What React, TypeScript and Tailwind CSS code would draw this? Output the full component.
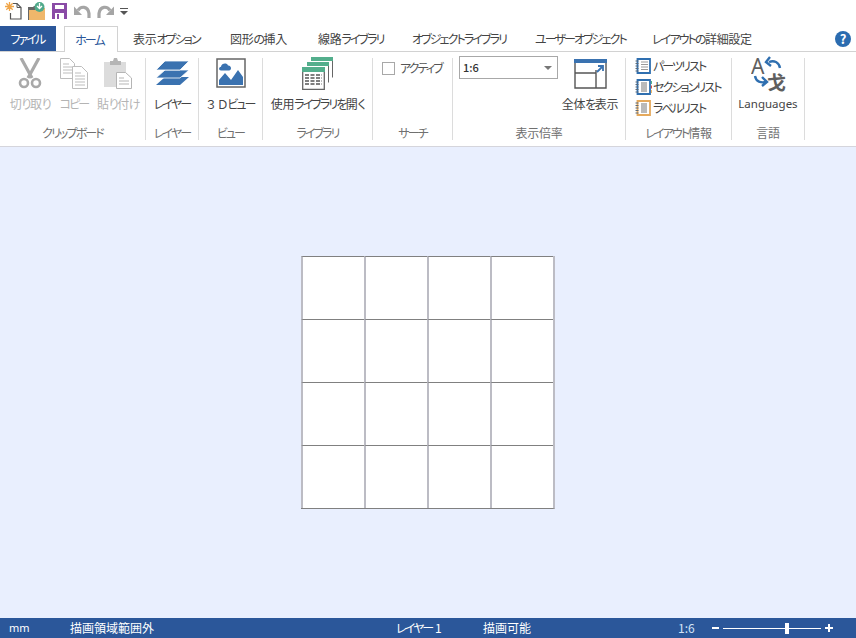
const FONT = "font-['Noto_Sans_CJK_JP','Noto_Sans',sans-serif] [font-feature-settings:'palt']"

const TABS = [
  { label: "表示オプション", width: "w-[97px]" },
  { label: "図形の挿入", width: "w-[88px]" },
  { label: "線路ライブラリ", width: "w-[94px]" },
  { label: "オブジェクトライブラリ", width: "w-[123px]" },
  { label: "ユーザーオブジェクト", width: "w-[117px]" },
  { label: "レイアウトの詳細設定", width: "w-[130px]" },
]

function Jp({ text }: { text: string }) {
  const runs = text.split(/([\u30A0-\u30FF]+|[\u3040-\u309F]+)/).filter(Boolean)

  return (
    <>
      {runs.map((run, i) => {
        if (/^[\u30A0-\u30FF]/.test(run)) {
          return <span key={i} className="tracking-[-1.900px]">{run}</span>
        }
        if (/^[\u3040-\u309F]/.test(run)) {
          return <span key={i} className="tracking-[-1.500px]">{run}</span>
        }
        return <span key={i} className="tracking-[-0.300px]">{run}</span>
      })}
    </>
  )
}

function NewIcon() {
  return (
    <svg width="17" height="18" viewBox="0 0 17 18" fill="none">
      <path d="M8 1.500h4l4 4v11.500H5.500v-6" stroke="#555" strokeWidth="1.200" />
      <path d="M12 1.500v4h4" stroke="#555" />
      <path d="M4.500 0v9M0 4.500h9M1.300 1.300l6.400 6.400M7.700 1.300l-6.400 6.400" stroke="#f0a64a" strokeWidth="1.300" />
    </svg>
  )
}

function OpenIcon() {
  return (
    <svg width="18" height="18" viewBox="0 0 18 18">
      <path d="M0 5h5l1-1h3v14H0z" fill="#666" />
      <path d="M1 18V8h6l2-2h8v12z" fill="#efb76b" />
      <circle cx="11.500" cy="5" r="5" fill="#4fa98a" />
      <path d="M9 4l2.500 2.500L14 4M11.500 1v5" stroke="#fff" strokeWidth="1.300" fill="none" />
    </svg>
  )
}

function SaveIcon() {
  return (
    <svg width="15" height="16" viewBox="0 0 15 16">
      <path d="M0 0h15v16H0z" fill="#8a4ba6" />
      <path d="M3 2h9v4H3z" fill="#fff" />
      <path d="M3 10h9v6H3z" fill="#fff" />
      <path d="M5 11h2v5H5z" fill="#8a4ba6" />
    </svg>
  )
}

function UndoIcon({ flip }: { flip?: boolean }) {
  return (
    <svg width="17" height="14" viewBox="0 0 17 14" fill="none" className={flip ? "-scale-x-100" : ""}>
      <path d="M4 6.500c2.500-4.500 10-5 11 3V14" stroke="#a5a5a5" strokeWidth="3.200" />
      <path d="M0 2.500V11h8z" fill="#a5a5a5" />
    </svg>
  )
}

function ScissorsIcon() {
  return (
    <svg width="24" height="31" viewBox="0 0 24 31" fill="none">
      <path d="M3 0l11 20M21 0L10 20" stroke="#a9a9a9" strokeWidth="3.200" />
      <circle cx="6" cy="25" r="4" stroke="#a9a9a9" strokeWidth="2.600" />
      <circle cx="18" cy="25" r="4" stroke="#a9a9a9" strokeWidth="2.600" />
    </svg>
  )
}

function CopyIcon() {
  return (
    <svg width="28" height="31" viewBox="0 0 28 31" fill="none" stroke="#bdbdbd">
      <path d="M.500.500h9l5 5v15H.500z" fill="#fff" />
      <path d="M3 6h6M3 9h9M3 12h9M3 15h9" />
      <path d="M12.500 8.500h9l6 6v16h-15z" fill="#fff" />
      <path d="M15 15h6M15 18h10M15 21h10M15 24h10M15 27h10" />
    </svg>
  )
}

function PasteIcon() {
  return (
    <svg width="28" height="31" viewBox="0 0 28 31" fill="none">
      <path d="M0 4h22v25H0z" fill="#dcdcdc" />
      <path d="M6 3h3l1-3h3l1 3h3v4H6z" fill="#b5b5b5" />
      <path d="M12.500 14.500h9l6 5.500v10.500h-15z" fill="#fff" stroke="#b5b5b5" />
      <path d="M15 20h5M15 23h10M15 26h10" stroke="#b5b5b5" />
    </svg>
  )
}

function LayersIcon() {
  return (
    <svg width="33" height="24" viewBox="0 0 33 24">
      <path d="M9 16h24l-9 8H0z" fill="#3a72b0" />
      <path d="M9 9h24l-9 8H0z" fill="#3a72b0" stroke="#fff" strokeWidth=".800" />
      <path d="M9 0h24l-9 9H0z" fill="#3a72b0" stroke="#fff" strokeWidth=".800" />
    </svg>
  )
}

function ViewIcon() {
  return (
    <svg width="30" height="30" viewBox="0 0 30 30">
      <path d="M1 1h28v28H1z" fill="#fff" stroke="#666" strokeWidth="1.500" />
      <path d="M5 12.500c-2.500 0-2.500-3.500 0-3.700C5.500 5 11 4.500 12 7.500c3-.5 4.500 4.500 1 5z" fill="#3a72b0" />
      <path d="M3 27v-5l6-7 6 7 7-10 5 7v8z" fill="#3a72b0" />
    </svg>
  )
}

function LibraryIcon() {
  return (
    <svg width="32" height="33" viewBox="0 0 32 33" fill="none">
      <path d="M9.500 1.500h21v19" stroke="#666" />
      <path d="M9 0h22v4H9z" fill="#53ae8c" />
      <path d="M5.500 5.500h21v20" stroke="#666" fill="#fff" />
      <path d="M5 5h22v4H5z" fill="#53ae8c" />
      <path d="M.7 10.700h21.600v21.600H.7z" fill="#fff" stroke="#666" strokeWidth="1.300" />
      <path d="M0 10h23v5H0z" fill="#53ae8c" />
      <path d="M3 18h17M3 21h17M3 24h17M3 27h17" stroke="#555" strokeWidth="1.500" strokeDasharray="4 1.500" />
    </svg>
  )
}

function FitIcon() {
  return (
    <svg width="33" height="30" viewBox="0 0 33 30" fill="none">
      <path d="M1 1h31v28H1z" stroke="#555" strokeWidth="1.400" />
      <path d="M0 0h33v4H0z" fill="#3a72b0" />
      <path d="M1 14h21v15M22 14v-3" stroke="#555" strokeWidth="1.400" />
      <path d="M23 13l6-6M24 7h5v5" stroke="#3a72b0" strokeWidth="1.800" />
    </svg>
  )
}

function ListIcon({ color, tabs, dense }: { color: string; tabs?: boolean; dense?: boolean }) {
  return (
    <svg width="17" height="16" viewBox="0 0 17 16" fill="none">
      <path d="M2.500 1h12.500v14H2.500z" fill="#fff" stroke={color} strokeWidth="1.800" />
      <path d="M.5 3h3M.5 5.500h3M.5 8h3M.5 10.500h3M.5 13h3" stroke="#5c6b7a" strokeWidth="1.100" />
      {dense ? (
        <path d="M6 4h6M6 6h6M6 8h6M6 10h6M6 12h6" stroke="#777" strokeWidth="1.200" />
      ) : (
        <path d="M6 4h7M6 6.500h7M6 9h7M6 11.500h7" stroke="#999" />
      )}
      {tabs && <path d="M16.500 2v3" stroke="#53ae8c" />}
      {tabs && <path d="M16.500 6.500v3" stroke="#d9534f" />}
      {tabs && <path d="M16.500 11v3" stroke="#efb76b" />}
    </svg>
  )
}

function LanguagesIcon() {
  return (
    <svg width="38" height="42" viewBox="0 -4 38 42" fill="none">
      <text x="0" y="17" fontSize="21" fill="#5f5f5f" fontFamily="Noto Sans">A</text>
      <text x="16" y="33" fontSize="19" fontWeight="700" fill="#5f5f5f" fontFamily="Noto Sans CJK SC">戈</text>
      <path d="M29 11c-1-6-6-8-11-6M19 0l-4 5 5 4" stroke="#2f6fb0" strokeWidth="2.400" />
      <path d="M4 19c1 6 6 7 11 6M11 20l5 5-5 4" stroke="#2f6fb0" strokeWidth="2.400" />
    </svg>
  )
}

function RibbonButton({ icon, label, disabled, className }: { icon: React.ReactNode; label: string; disabled?: boolean; className?: string }) {
  return (
    <div className={`flex flex-col items-center ${className ?? ""}`}>
      <div className="flex h-[33px] items-start justify-center">{icon}</div>
      <div className={`h-[26px] whitespace-nowrap leading-[26px] ${disabled ? "text-[#b4b4b4]" : "text-[#444]"}`}>
        <Jp text={label} />
      </div>
    </div>
  )
}

function RibbonGroup({ label, width, children }: { label: string; width: string; children: React.ReactNode }) {
  return (
    <div className={`flex h-[82px] shrink-0 flex-col border-r border-[#dcdcdc] ${width}`}>
      <div className="flex h-[67px] shrink-0">{children}</div>
      <div className="h-4 shrink-0 text-center leading-4 whitespace-nowrap text-[#707070]">
        <Jp text={label} />
      </div>
    </div>
  )
}

export default function App() {
  return (
    <div className={`flex h-[638px] w-[856px] flex-col overflow-hidden bg-white text-xs ${FONT}`}>
      {/* quick access */}
      <div className="flex h-[26px] items-center pb-[4px] pl-[5px]">
        <div className="w-[23px]"><NewIcon /></div>
        <div className="w-[24px]"><OpenIcon /></div>
        <div className="w-[22px]"><SaveIcon /></div>
        <div className="w-[23px]"><UndoIcon /></div>
        <div className="w-[23px]"><UndoIcon flip /></div>
        <svg width="8" height="7" viewBox="0 0 8 7">
          <path d="M0 0h8v1H0zM0 3h8L4 7z" fill="#555" />
        </svg>
      </div>

      {/* tabs */}
      <div className="flex h-[26px] items-stretch border-b border-[#d2d2d2]">
        <div className="flex h-[25px] w-[56px] items-center justify-center bg-[#2b579a] pr-[1px] text-white"><Jp text="ファイル" /></div>
        <div className="z-10 ml-[8px] flex h-[26px] w-[54px] items-center justify-center border border-b-0 border-[#d2d2d2] bg-white pr-[3px] text-[#2b579a]"><Jp text="ホーム" /></div>
        <div className="ml-[15px] flex">
          {TABS.map((tab) => (
            <div key={tab.label} className={`flex items-center whitespace-nowrap text-[#444] ${tab.width}`}>
              <span><Jp text={tab.label} /></span>
            </div>
          ))}
        </div>
        <div className="ml-auto flex items-center pr-[5px]">
          <div className="flex h-4 w-4 items-center justify-center rounded-full bg-[#2b6cb0] text-[13px] leading-none font-bold text-white">?</div>
        </div>
      </div>

      {/* ribbon */}
      <div className="flex h-[95px] border-b border-[#d5d5dc] pt-[6px]">
        <RibbonGroup label="クリップボード" width="w-[146px]">
          <div className="flex pl-[8px]">
            <RibbonButton className="w-[44px]" disabled icon={<ScissorsIcon />} label="切り取り" />
            <RibbonButton className="w-[44px]" disabled icon={<CopyIcon />} label="コピー" />
            <RibbonButton className="w-[44px]" disabled icon={<PasteIcon />} label="貼り付け" />
          </div>
        </RibbonGroup>
        <RibbonGroup label="レイヤー" width="w-[53px]">
          <RibbonButton className="w-full pt-[3px] [&>div:last-child]:-mt-[3px]" icon={<LayersIcon />} label="レイヤー" />
        </RibbonGroup>
        <RibbonGroup label="ビュー" width="w-[64px]">
          <RibbonButton className="w-full" icon={<ViewIcon />} label="３ Ｄビュー" />
        </RibbonGroup>
        <RibbonGroup label="ライブラリ" width="w-[110px]">
          <RibbonButton className="w-full -mt-[1px] [&>div:last-child]:mt-[1px]" icon={<LibraryIcon />} label="使用ライブラリを開く" />
        </RibbonGroup>
        <RibbonGroup label="サーチ" width="w-[80px]">
          <div className="flex h-[18px] items-center pt-[2px] pl-[9px] text-[#555]">
            <div className="h-[13px] w-[13px] border border-[#a8a8a8] bg-white" />
            <div className="ml-[5px] whitespace-nowrap"><Jp text="アクティブ" /></div>
          </div>
        </RibbonGroup>
        <RibbonGroup label="表示倍率" width="w-[173px]">
          <div className="-mt-[2px] ml-[6px] flex h-[23px] w-[99px] items-center justify-between border border-[#a8a8a8] pr-[5px] pl-[3px] text-[11px] font-medium text-[#333]">
            <span>1:6</span>
            <svg width="8" height="4" viewBox="0 0 8 4"><path d="M0 0h8L4 4z" fill="#777" /></svg>
          </div>
          <RibbonButton className="ml-[3px] w-[58px] pt-[1px] [&>div:last-child]:-mt-[1px]" icon={<FitIcon />} label="全体を表示" />
        </RibbonGroup>
        <RibbonGroup label="レイアウト情報" width="w-[106px]">
          <div className="-mt-[3px] flex flex-col pl-[9px] text-[#444]">
            <div className="flex h-[21px] items-center gap-[1px] whitespace-nowrap"><ListIcon color="#2f6fb0" /><span><Jp text="パーツリスト" /></span></div>
            <div className="flex h-[21px] items-center gap-[1px] whitespace-nowrap"><ListIcon color="#2f6fb0" tabs dense /><span><Jp text="セクションリスト" /></span></div>
            <div className="flex h-[21px] items-center gap-[1px] whitespace-nowrap"><ListIcon color="#e5a95c" dense /><span><Jp text="ラベルリスト" /></span></div>
          </div>
        </RibbonGroup>
        <RibbonGroup label="言語" width="w-[73px]">
          <div className="flex w-full flex-col items-center">
            <div className="-mt-[5px] h-[38px] overflow-visible pl-[4px]"><LanguagesIcon /></div>
            <div className="h-[26px] font-['Noto_Sans',sans-serif] text-[11.500px] leading-[26px] text-[#444]">Languages</div>
          </div>
        </RibbonGroup>
      </div>

      {/* canvas */}
      <div className="flex min-h-0 flex-1 items-center justify-center bg-[#e9effe]">
        <div className="grid grid-cols-[repeat(4,63px)] grid-rows-[repeat(4,63px)] border-r-2 border-b border-r-[#bcbcc4] border-b-[#808080]">
          {Array.from({ length: 16 }).map((_, i) => (
            <div key={i} className="border-t border-l-2 border-t-[#808080] border-l-[#bcbcc4] bg-white" />
          ))}
        </div>
      </div>

      {/* status bar */}
      <div className="flex h-[20px] items-center bg-[#2b579a] text-white">
        <div className="w-[70px] pl-[9px] font-['Noto_Sans',sans-serif] text-[11px]">mm</div>
        <div className="w-[326px] whitespace-nowrap">描画領域範囲外</div>
        <div className="w-[87px] whitespace-nowrap"><Jp text="レイヤー" /> 1</div>
        <div className="w-[195px] whitespace-nowrap">描画可能</div>
        <div className="w-[34px] text-xs text-[#d5e4f7]">1:6</div>
        <div className="h-[2px] w-[7px] bg-white" />
        <div className="relative ml-[4px] h-px w-[98px] bg-white">
          <div className="absolute -top-[5px] left-[62px] h-[11px] w-[4px] bg-white" />
        </div>
        <div className="relative ml-[4px] h-[8px] w-[8px]">
          <div className="absolute top-[3px] left-0 h-[2px] w-[8px] bg-white" />
          <div className="absolute top-0 left-[3px] h-[8px] w-[2px] bg-white" />
        </div>
      </div>
    </div>
  )
}
